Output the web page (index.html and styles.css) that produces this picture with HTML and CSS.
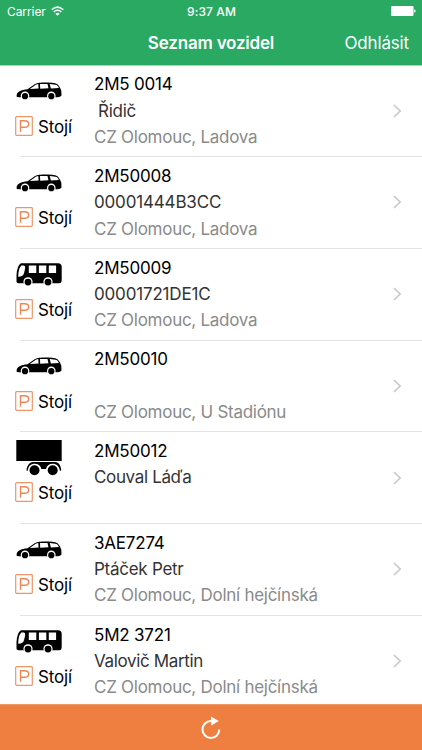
FILE: index.html
```
<!DOCTYPE html>
<html lang="cs">
<head>
<meta charset="utf-8">
<title>Seznam vozidel</title>
<link rel="stylesheet" href="styles.css">
</head>
<body>
<svg class="defs" aria-hidden="true">
  <symbol id="car" viewBox="0 0 46 36">
    <path d="M.6 14.500C.8 10.600 5 9 11.500 8.200L18 3.800C20.500 2.100 23 1.700 28 1.600c6 0 11 .3 13.500 1.600 1.800 1.700 3 4.200 3.800 6.600l.2 4.600-1.500 1.400-2.500.5H3.500L.8 16z"/>
    <path fill="#fff" d="M13.800 8l5-3.600c1-.7 2-1.100 3.500-1.300l.3 4.500zM24 2.900h7.500l1 4.400-8.300.4zM33.700 2.900c3 .1 5.500.5 7 1.200 1 .9 1.700 1.700 2.200 2.900l-8 .4z"/>
    <circle cx="9" cy="14.900" r="4.300" fill="#fff"/><circle cx="35.300" cy="14.900" r="4.300" fill="#fff"/>
    <circle cx="9" cy="15.200" r="3.100"/><circle cx="35.300" cy="15.200" r="3.100"/>
  </symbol>
  <symbol id="bus" viewBox="0 0 46 36">
    <path d="M5 .2h37q3.700 0 3.700 3.500v13q0 3.500-2.500 3.500H2.500Q.5 20.200.5 18.500V12Q1.200 2 5 .2z"/>
    <path fill="#fff" d="M5.200 2.500h2.700q1.500 0 1.300 2.500L8.200 9.500q-.8 4.300-6 4.300Q2.200 6 5.200 2.500zM12.800 2.500h7.500v7.500h-7.500zM22.900 2.500h7.400v7.500h-7.400zM32.800 2.500h7.300v7.500h-7.300z"/>
    <circle cx="12" cy="18.800" r="4.600" fill="#fff"/><circle cx="32" cy="18.800" r="4.600" fill="#fff"/>
    <circle cx="12" cy="19.100" r="3.400"/><circle cx="32" cy="19.100" r="3.400"/>
  </symbol>
  <symbol id="trailer" viewBox="0 0 46 36">
    <path d="M.3 0h45.400v21H.3z"/>
    <path d="M10.500 30.500C11 25 14 22 17 22h22c3.500 0 5.900 3 6.200 8.500l-1.300.2C43.200 26 40.500 23.700 36.700 23.700c-3.700 0-6 2-6.700 5.300h-4.600C24.700 25.700 22.400 23.700 18.700 23.700c-3.800 0-6.500 2.500-6.900 7z"/>
    <circle cx="18.500" cy="30.200" r="5"/><circle cx="36.700" cy="30.200" r="5"/>
  </symbol>
  <symbol id="parking" viewBox="0 0 18 20">
    <path fill="none" stroke="#ee9668" stroke-width="1.200" d="M1.500.7h15q.8 0 .8.800v17q0 .8-.8.800h-15q-.8 0-.8-.8v-17q0-.8.8-.8z"/>
    <path fill="none" stroke="#ee8753" stroke-width="1.400" d="M5.500 15.700V4.700h4q4.200 0 4.200 3.200T9.500 11.200h-4"/>
  </symbol>
  <symbol id="chevron" viewBox="0 0 9 14">
    <path fill="none" stroke="#c7c7cc" stroke-width="1.600" d="M1 1l6.200 6L1 13"/>
  </symbol>
</svg>
<header class="header">
  <div class="status">
    <div class="carrier"><span>Carrier</span>
      <svg class="wifi" viewBox="0 0 13 10"><g fill="none" stroke="#fff" stroke-width="1.500"><path d="M.7 3.700q5.800-5.200 11.600 0M2.700 5.900q3.800-3.400 7.600 0"/></g><path fill="#fff" d="M4.300 7.500q2.200-1.700 4.400 0L6.500 9.700z"/></svg>
    </div>
    <span class="clock">9:37 AM</span>
    <svg class="battery" viewBox="0 0 25 10"><rect width="22.500" height="10" rx="1.200" fill="#fff"/><path fill="#fff" d="M23.200 3.300q1.500.4 1.500 1.700t-1.500 1.700z"/></svg>
  </div>
  <div class="nav">
    <h1 class="title">Seznam vozidel</h1>
    <span class="logout">Odhlásit</span>
  </div>
</header>
<main class="list">
  <section class="row">
    <div class="state"><svg class="vehicle car"><use href="#car"/></svg><div class="parked"><svg class="parking"><use href="#parking"/></svg><span>Stojí</span></div></div>
    <div class="info"><div class="plate">2M5 0014</div><div class="driver indent">Řidič</div><div class="place">CZ Olomouc, Ladova</div></div>
    <svg class="chevron"><use href="#chevron"/></svg>
  </section>
  <section class="row">
    <div class="state"><svg class="vehicle car"><use href="#car"/></svg><div class="parked"><svg class="parking"><use href="#parking"/></svg><span>Stojí</span></div></div>
    <div class="info"><div class="plate">2M50008</div><div class="driver digits">00001444B3CC</div><div class="place">CZ Olomouc, Ladova</div></div>
    <svg class="chevron"><use href="#chevron"/></svg>
  </section>
  <section class="row">
    <div class="state"><svg class="vehicle bus"><use href="#bus"/></svg><div class="parked"><svg class="parking"><use href="#parking"/></svg><span>Stojí</span></div></div>
    <div class="info"><div class="plate">2M50009</div><div class="driver digits">00001721DE1C</div><div class="place">CZ Olomouc, Ladova</div></div>
    <svg class="chevron"><use href="#chevron"/></svg>
  </section>
  <section class="row">
    <div class="state"><svg class="vehicle car"><use href="#car"/></svg><div class="parked"><svg class="parking"><use href="#parking"/></svg><span>Stojí</span></div></div>
    <div class="info"><div class="plate">2M50010</div><div class="driver"></div><div class="place">CZ Olomouc, U Stadiónu</div></div>
    <svg class="chevron"><use href="#chevron"/></svg>
  </section>
  <section class="row">
    <div class="state"><svg class="vehicle trailer"><use href="#trailer"/></svg><div class="parked"><svg class="parking"><use href="#parking"/></svg><span>Stojí</span></div></div>
    <div class="info"><div class="plate">2M50012</div><div class="driver name">Couval Láďa</div><div class="place"></div></div>
    <svg class="chevron"><use href="#chevron"/></svg>
  </section>
  <section class="row">
    <div class="state"><svg class="vehicle car"><use href="#car"/></svg><div class="parked"><svg class="parking"><use href="#parking"/></svg><span>Stojí</span></div></div>
    <div class="info"><div class="plate">3AE7274</div><div class="driver">Ptáček Petr</div><div class="place">CZ Olomouc, Dolní hejčínská</div></div>
    <svg class="chevron"><use href="#chevron"/></svg>
  </section>
  <section class="row">
    <div class="state"><svg class="vehicle bus"><use href="#bus"/></svg><div class="parked"><svg class="parking"><use href="#parking"/></svg><span>Stojí</span></div></div>
    <div class="info"><div class="plate">5M2 3721</div><div class="driver name">Valovič Martin</div><div class="place">CZ Olomouc, Dolní hejčínská</div></div>
    <svg class="chevron"><use href="#chevron"/></svg>
  </section>
</main>
<footer class="toolbar">
  <svg class="refresh" viewBox="0 0 20 24"><path fill="none" stroke="#fff" stroke-width="2" d="M18.300 13.500a8.400 8.400 0 1 1-8.400-8.400h1"/><path fill="#fff" d="M10 .5l7.800 4.600-7.800 4.700z"/></svg>
</footer>
</body>
</html>
```
FILE: styles.css
```
* { box-sizing: border-box; }
body {
  margin: 0;
  height: 750px;
  overflow: hidden;
  display: flex;
  flex-direction: column;
  background: #fff;
  color: #000;
  font-family: Inter, "Liberation Sans", sans-serif;
  font-size: 17px;
  letter-spacing: -0.27px;
}
svg { display: block; flex: none; }
.defs { width: 0; height: 0; }
.header { flex: none; height: 66px; background: #2aa963; border-bottom: 1px solid #9fd8b8; color: #fff; }
.status {
  display: grid;
  grid-template-columns: 1fr auto 1fr;
  align-items: center;
  height: 22px;
  padding: 0 6px 0 7px;
  font-size: 12px;
  letter-spacing: 0;
}
.carrier { display: flex; align-items: center; gap: 5px; letter-spacing: -0.08px; }
.wifi { width: 13px; height: 10px; }
.clock { font-weight: 500; letter-spacing: 0.1px; }
.battery { width: 25px; height: 10px; justify-self: end; }
.nav {
  display: grid;
  grid-template-columns: 1fr auto 1fr;
  align-items: center;
  height: 42px;
  padding: 0 13px;
}
.title { grid-column: 2; margin: 0; font-size: 17px; font-weight: 600; letter-spacing: -0.2px; }
.logout { justify-self: end; letter-spacing: -0.15px; }
.list { flex: 1; min-height: 0; overflow: hidden; }
.row {
  display: grid;
  grid-template-columns: 79px 1fr 9px;
  height: 91.7px;
  padding: 0 20px 0 15px;
  background: linear-gradient(#e3e3e5, #e3e3e5) 20px 100% / 100% 1px no-repeat;
}
.row:first-child { margin-top: -0.500px; }
.vehicle { width: 46px; height: 36px; margin-left: 1px; }
.state { display: flex; flex-direction: column; justify-content: space-between; height: 70px; }
.car { margin-top: 15.700px; }
.bus { margin-top: 14.500px; }
.trailer { margin-top: 8px; }
.parked { display: flex; align-items: center; gap: 5px; height: 20px; margin-top: -6px; }
.parked span { padding-top: 2px; letter-spacing: -0.15px; }
.parking { width: 18px; height: 20px; }
.info { padding-top: 5.900px; white-space: nowrap; }
.info div { height: 26.300px; line-height: 26.300px; }
.info .plate { letter-spacing: -0.2px; }
.info .driver { color: #333; }
.info .digits { letter-spacing: -0.17px; }
.info .name { letter-spacing: -0.35px; }
.info .place { color: #8a8a8a; }
.indent { padding-left: 4px; }
.chevron { width: 9px; height: 14px; margin-top: 38.300px; }
.toolbar { flex: none; height: 46px; display: grid; place-items: center; background: #ee7f41; border-top: 1px solid #ef9967; }
.refresh { width: 20px; height: 24px; }
```
